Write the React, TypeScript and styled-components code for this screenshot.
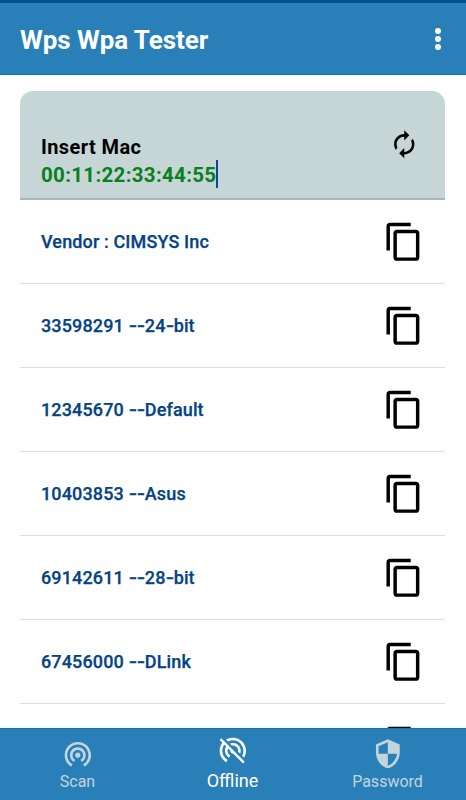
import React from "react";
import styled, { createGlobalStyle, css } from "styled-components";

const GlobalStyle = createGlobalStyle`
  * { box-sizing: border-box; }
  body { margin: 0; background: #fff; font-family: Roboto, "Liberation Sans", sans-serif; overflow: hidden; }
`;

const Screen = styled.div`
  display: flex;
  flex-direction: column;
  width: 466px;
  height: 800px;
  overflow: hidden;
  background: #fff;
`;

const AppBar = styled.header`
  display: flex;
  flex: none;
  align-items: center;
  justify-content: space-between;
  height: 75px;
  padding: 3px 25.5px 0 20px;
  background: #2980b9;
  border-top: 3px solid #01528c;
  border-bottom: 1px solid #0f76b4;
`;

const Title = styled.h1`
  margin: 0;
  font-size: 26px;
  line-height: 32px;
  font-weight: 700;
  letter-spacing: -0.06px;
  color: #fff;
`;

const MenuButton = styled.button`
  display: flex;
  flex-direction: column;
  gap: 2px;
  margin-top: -2px;
  padding: 0;
  border: 0;
  background: none;
`;

const Dot = styled.span`
  width: 6px;
  height: 6px;
  border-radius: 50%;
  background: #fff;
`;

const Content = styled.main`
  flex: 1;
  min-height: 0;
  padding: 16px 21px 0 20px;
  overflow: hidden;
`;

const MacPanel = styled.section`
  display: flex;
  justify-content: space-between;
  height: 109px;
  padding: 42px 26px 0 21px;
  border-radius: 13px 13px 0 0;
  border-bottom: 2px solid #a9b5b6;
  background: #c6d5d6;
`;

const MacField = styled.div`
  display: flex;
  flex-direction: column;
  font-size: 20px;
  line-height: 28px;
  font-weight: 700;
`;

const FieldLabel = styled.span`
  color: #000;
  letter-spacing: 0.4px;
`;

const FieldValue = styled.span`
  display: flex;
  color: #088020;
  font-size: 20.5px;
  letter-spacing: 0.32px;
`;

const Caret = styled.i`
  width: 2px;
  height: 28px;
  margin-top: -1px;
  background: #0b4a8c;
`;

const Row = styled.div`
  display: flex;
  align-items: center;
  justify-content: space-between;
  height: 84.05px;
  padding: 0 20px 0 21px;
  border-bottom: 1px solid #dcdfe1;
`;

const RowText = styled.span`
  font-size: 18px;
  line-height: 24px;
  font-weight: 500;
  letter-spacing: 0.13px;
  color: #034384;
  -webkit-text-stroke: 0.25px #034384;
`;

const Dash = styled.span`
  display: inline-block;
  margin-right: 1.9px;
  transform: scaleX(1.3);
  transform-origin: left center;
`;

const Icon = styled.svg<{ $size: number }>`
  display: block;
  flex: none;
  width: ${(p) => p.$size}px;
  height: ${(p) => p.$size}px;
  fill: currentColor;
`;

const RefreshIcon = styled(Icon)`
  margin-top: -4px;
`;

const TabBar = styled.nav`
  display: grid;
  flex: none;
  grid-template-columns: repeat(3, 1fr);
  height: 72px;
  padding-right: 1px;
  border-top: 1px solid #0f76b4;
  background: #2980b9;
`;

const Tab = styled.div<{ $active?: boolean }>`
  display: flex;
  flex-direction: column;
  align-items: center;
  padding-top: 8.5px;
  color: #c3d5da;
  font-size: 16px;
  line-height: 25px;
  ${(p) =>
    p.$active &&
    css`
      padding-top: 6px;
      color: #fff;
      font-size: 18px;
      line-height: 28px;
    `}
`;

const paths = {
  copy: "M16 1H4c-1.1 0-2 .9-2 2v14h2V3h12V1zm3 4H8c-1.1 0-2 .9-2 2v14c0 1.1.9 2 2 2h11c1.1 0 2-.9 2-2V7c0-1.1-.9-2-2-2zm0 16H8V7h11v14z",
  renew:
    "M12 6v3l4-4-4-4v3c-4.42 0-8 3.58-8 8 0 1.57.46 3.03 1.24 4.26L6.7 14.8c-.45-.83-.7-1.79-.7-2.8 0-3.31 2.69-6 6-6zm6.76 1.74L17.3 9.2c.44.84.7 1.79.7 2.8 0 3.31-2.69 6-6 6v-3l-4 4 4 4v-3c4.42 0 8-3.58 8-8 0-1.57-.46-3.03-1.24-4.26z",
  scan: "M12 11c-1.1 0-2 .9-2 2s.9 2 2 2 2-.9 2-2-.9-2-2-2zm6 2c0-3.31-2.69-6-6-6s-6 2.69-6 6c0 2.22 1.21 4.15 3 5.19l1-1.74c-1.19-.7-2-1.97-2-3.45 0-2.21 1.79-4 4-4s4 1.79 4 4c0 1.48-.81 2.75-2 3.45l1 1.74c1.79-1.04 3-2.97 3-5.19zM12 3C6.48 3 2 7.48 2 13c0 3.7 2.01 6.92 4.99 8.65l1-1.73C5.61 18.53 4 15.96 4 13c0-4.42 3.58-8 8-8s8 3.58 8 8c0 2.96-1.61 5.53-4 6.92l1 1.73c2.99-1.73 5-4.95 5-8.65 0-5.52-4.48-10-10-10z",
  offline:
    "M17.56 14.24c.28-.69.44-1.45.44-2.24 0-3.31-2.69-6-6-6-.79 0-1.55.16-2.24.44l1.62 1.62c.2-.03.41-.06.62-.06 2.21 0 4 1.79 4 4 0 .21-.02.42-.05.63l1.61 1.61zM12 4c4.42 0 8 3.58 8 8 0 1.35-.35 2.62-.95 3.74l1.47 1.47C21.46 15.69 22 13.91 22 12c0-5.52-4.48-10-10-10-1.91 0-3.69.55-5.21 1.47l1.46 1.46C9.37 4.34 10.65 4 12 4zM3.27 2.5L2 3.77l2.1 2.1C2.79 7.57 2 9.69 2 12c0 3.7 2.01 6.92 4.99 8.65l1-1.73C5.61 17.53 4 14.96 4 12c0-1.76.57-3.38 1.53-4.69l1.43 1.44C6.36 9.68 6 10.8 6 12c0 2.22 1.21 4.15 3 5.19l1-1.74c-1.19-.7-2-1.97-2-3.45 0-.65.17-1.25.44-1.79l1.58 1.58L10 12c0 1.1.9 2 2 2l.21-.02.01.01 7.51 7.51L21 20.23 4.27 3.5l-1-1z",
  password:
    "M12 1L3 5v6c0 5.55 3.84 10.74 9 12 5.16-1.26 9-6.45 9-12V5l-9-4zm0 10.99h7c-.53 4.12-3.28 7.79-7 8.94V12H5V6.3l7-3.11v8.8z",
};

const results = [
  "Vendor : CIMSYS Inc",
  "33598291 --24-bit",
  "12345670 --Default",
  "10403853 --Asus",
  "69142611 --28-bit",
  "67456000 --DLink",
  "",
];

export default function App() {
  return (
    <Screen>
      <GlobalStyle />
      <AppBar>
        <Title>Wps Wpa Tester</Title>
        <MenuButton aria-label="Menu">
          <Dot />
          <Dot />
          <Dot />
        </MenuButton>
      </AppBar>
      <Content>
        <MacPanel>
          <MacField>
            <FieldLabel>Insert Mac</FieldLabel>
            <FieldValue>
              00:11:22:33:44:55
              <Caret />
            </FieldValue>
          </MacField>
          <RefreshIcon $size={30.5} viewBox="0 0 24 24">
            <path d={paths.renew} />
          </RefreshIcon>
        </MacPanel>
        {results.map((text) => (
          <Row key={text}>
            <RowText>
              {text
                .split(/(-)/)
                .map((part, i) => (part === "-" ? <Dash key={i}>{part}</Dash> : part))}
            </RowText>
            <Icon $size={41.6} viewBox="0 0 24 24">
              <path d={paths.copy} />
            </Icon>
          </Row>
        ))}
      </Content>
      <TabBar>
        <Tab>
          <Icon $size={31.7} viewBox="0 0 24 24">
            <path d={paths.scan} />
          </Icon>
          Scan
        </Tab>
        <Tab $active>
          <Icon $size={31.7} viewBox="0 0 24 24">
            <path d={paths.offline} />
          </Icon>
          Offline
        </Tab>
        <Tab>
          <Icon $size={31.7} viewBox="0 0 24 24">
            <path d={paths.password} />
          </Icon>
          Password
        </Tab>
      </TabBar>
    </Screen>
  );
}
